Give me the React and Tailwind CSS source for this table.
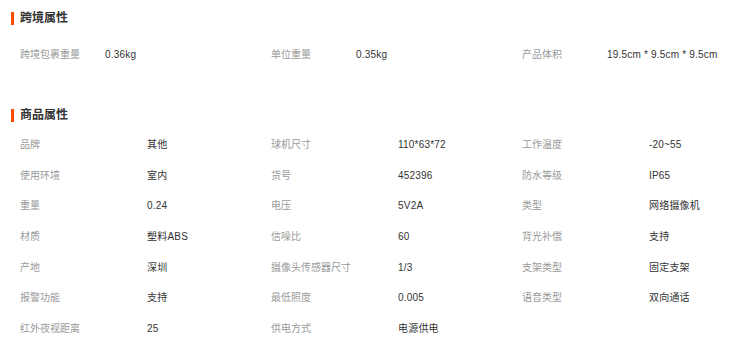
import React from 'react';

const crossBorder = [
  ['跨境包裹重量', '0.36kg'],
  ['单位重量', '0.35kg'],
  ['产品体积', '19.5cm * 9.5cm * 9.5cm'],
];

const goods = [
  ['品牌', '其他'],
  ['球机尺寸', '110*63*72'],
  ['工作温度', '-20~55'],
  ['使用环境', '室内'],
  ['货号', '452396'],
  ['防水等级', 'IP65'],
  ['重量', '0.24'],
  ['电压', '5V2A'],
  ['类型', '网络摄像机'],
  ['材质', '塑料ABS'],
  ['信噪比', '60'],
  ['背光补偿', '支持'],
  ['产地', '深圳'],
  ['摄像头传感器尺寸', '1/3'],
  ['支架类型', '固定支架'],
  ['报警功能', '支持'],
  ['最低照度', '0.005'],
  ['语音类型', '双向通话'],
  ['红外夜视距离', '25'],
  ['供电方式', '电源供电'],
];

const SectionTitle = ({ children, className = '' }) => (
  <div className={`flex items-center h-[13px] ml-[11px] ${className}`}>
    <span className="w-[3px] h-[13px] bg-[#ff4a00]" />
    <span className="ml-[6px] text-[12px] leading-[13px] font-bold text-[#333]">{children}</span>
  </div>
);

const AttrGrid = ({ items, labelWidth, className = '' }) => (
  <div className={`grid grid-cols-[251px_251px_1fr] pl-[20px] ${className}`}>
    {items.map(([label, value]) => (
      <div key={label} className="flex items-center h-[30.67px] text-[10px] whitespace-nowrap">
        <span className="text-[#9a9a9a] shrink-0" style={{ width: labelWidth }}>
          {label}
        </span>
        <span className="text-[#333] tracking-[0.2px]">{value}</span>
      </div>
    ))}
  </div>
);

export default function App() {
  return (
    <div
      className="w-[744px] h-[338px] bg-white overflow-hidden pt-[12px]"
      style={{ fontFamily: '"Liberation Sans", "Noto Sans CJK SC", sans-serif' }}
    >
      <SectionTitle>跨境属性</SectionTitle>
      <AttrGrid items={crossBorder} labelWidth={85} className="mt-[13.7px]" />

      <SectionTitle className="mt-[40px]">商品属性</SectionTitle>
      <AttrGrid items={goods} labelWidth={127} className="mt-[7px]" />
    </div>
  );
}
